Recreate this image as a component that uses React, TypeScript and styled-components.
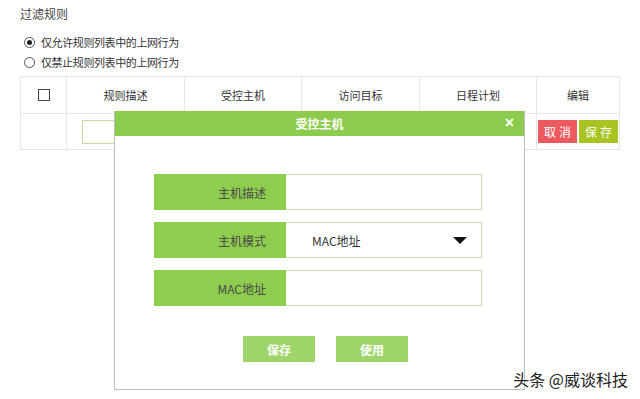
import React, { useState } from 'react';
import styled, { createGlobalStyle } from 'styled-components';

const GlobalStyle = createGlobalStyle`
  html, body {
    margin: 0;
    padding: 0;
    background: #ffffff;
  }
  body {
    font-family: "Microsoft YaHei", "Noto Sans CJK SC", "Liberation Sans", sans-serif;
    color: #333;
  }
`;

const Page = styled.div`
  position: relative;
  width: 640px;
  height: 399px;
  padding: 5px 20px 0;
  box-sizing: border-box;
  overflow: hidden;
`;

const Title = styled.div`
  font-size: 12px;
  line-height: 18px;
  color: #444;
  margin-bottom: 9px;
`;

const RadioRow = styled.label`
  display: flex;
  align-items: center;
  height: 20px;
  padding-left: 4px;
  font-size: 11px;
  letter-spacing: -0.4px;
  color: #333;
  gap: 6px;
`;

const RadioDot = styled.span<{ $checked?: boolean }>`
  width: 9px;
  height: 9px;
  border: 1px solid #555;
  border-radius: 50%;
  display: flex;
  align-items: center;
  justify-content: center;
  &::after {
    content: '';
    width: 5px;
    height: 5px;
    border-radius: 50%;
    background: ${p => (p.$checked ? '#222' : 'transparent')};
  }
`;

const Table = styled.div`
  margin-top: 4px;
  width: 600px;
  border: 1px solid #e6e6e6;
  box-sizing: border-box;
`;

const Row = styled.div<{ $height: number }>`
  display: grid;
  grid-template-columns: 45px 118px 117px 118px 117px 1fr;
  height: ${p => p.$height}px;
  & + & {
    border-top: 1px solid #e6e6e6;
  }
`;

const Cell = styled.div`
  display: flex;
  align-items: center;
  justify-content: center;
  font-size: 11px;
  color: #333;
  & + & {
    border-left: 1px solid #e6e6e6;
  }
`;

const Checkbox = styled.span`
  width: 10px;
  height: 10px;
  border: 1px solid #444;
`;

const InputCell = styled(Cell)`
  justify-content: flex-start;
`;

const CellInput = styled.div`
  width: 90px;
  height: 24px;
  border: 1px solid #c9d9a4;
  box-sizing: border-box;
  margin-left: 15px;
`;

const EditCell = styled(Cell)`
  gap: 2px;
`;

const SmallBtn = styled.button<{ $tone: 'red' | 'olive' }>`
  width: 39px;
  height: 23px;
  border: none;
  padding: 0;
  color: #fff;
  font-family: inherit;
  font-size: 12px;
  letter-spacing: 3px;
  text-indent: 3px;
  background: ${p => (p.$tone === 'red' ? '#ec5a5f' : '#a8c423')};
`;

const Modal = styled.div`
  position: absolute;
  left: 114px;
  top: 111px;
  width: 411px;
  height: 279px;
  background: #fff;
  border: 1px solid #bdbdbd;
  border-top: none;
  box-sizing: border-box;
  display: flex;
  flex-direction: column;
`;

const ModalHeader = styled.div`
  position: relative;
  height: 25px;
  background: #8dcb4d;
  color: #fff;
  font-size: 12px;
  font-weight: bold;
  display: flex;
  align-items: center;
  justify-content: center;
`;

const Close = styled.span`
  position: absolute;
  right: 10px;
  top: 3px;
  font-size: 16px;
  line-height: 18px;
  font-family: "Liberation Sans", sans-serif;
  font-weight: bold;
`;

const Form = styled.div`
  display: flex;
  flex-direction: column;
  gap: 12px;
  padding: 38px 0 0 39px;
`;

const Field = styled.div`
  display: flex;
  width: 328px;
  height: 36px;
`;

const FieldLabel = styled.div`
  width: 132px;
  background: #8fcd4f;
  display: flex;
  align-items: center;
  justify-content: flex-end;
  padding-right: 20px;
  box-sizing: border-box;
  font-size: 12px;
  color: #4a4a4a;
`;

const FieldBox = styled.div`
  flex: 1;
  border: 1px solid #cfd6b3;
  border-left: none;
  display: flex;
  align-items: center;
  justify-content: space-between;
  padding: 0 14px 0 26px;
  font-size: 12px;
  color: #333;
`;

const Caret = styled.span`
  width: 0;
  height: 0;
  border-left: 7px solid transparent;
  border-right: 7px solid transparent;
  border-top: 7px solid #111;
`;

const Actions = styled.div`
  display: flex;
  gap: 21px;
  padding: 30px 0 0 128px;
`;

const ActionBtn = styled.button`
  width: 72px;
  height: 26px;
  border: none;
  background: #a0d56c;
  color: #fff;
  font-family: inherit;
  font-size: 12px;
  font-weight: bold;
  padding: 0;
`;

const Watermark = styled.div`
  position: absolute;
  right: 12px;
  bottom: 8px;
  font-size: 16px;
  color: #222;
`;

const headers = ['规则描述', '受控主机', '访问目标', '日程计划', '编辑'];

export default function App() {
  const [allow] = useState(true);
  return (
    <Page>
      <GlobalStyle />
      <Title>过滤规则</Title>
      <RadioRow><RadioDot $checked={allow} />仅允许规则列表中的上网行为</RadioRow>
      <RadioRow><RadioDot $checked={!allow} />仅禁止规则列表中的上网行为</RadioRow>
      <Table>
        <Row $height={36}>
          <Cell><Checkbox /></Cell>
          {headers.map(h => <Cell key={h}>{h}</Cell>)}
        </Row>
        <Row $height={35}>
          <Cell />
          <InputCell><CellInput /></InputCell>
          <Cell />
          <Cell />
          <Cell />
          <EditCell>
            <SmallBtn $tone="red">取消</SmallBtn>
            <SmallBtn $tone="olive">保存</SmallBtn>
          </EditCell>
        </Row>
      </Table>

      <Modal>
        <ModalHeader>
          受控主机
          <Close>×</Close>
        </ModalHeader>
        <Form>
          <Field>
            <FieldLabel>主机描述</FieldLabel>
            <FieldBox />
          </Field>
          <Field>
            <FieldLabel>主机模式</FieldLabel>
            <FieldBox>MAC地址<Caret /></FieldBox>
          </Field>
          <Field>
            <FieldLabel>MAC地址</FieldLabel>
            <FieldBox />
          </Field>
        </Form>
        <Actions>
          <ActionBtn>保存</ActionBtn>
          <ActionBtn>使用</ActionBtn>
        </Actions>
      </Modal>

      <Watermark>头条 @威谈科技</Watermark>
    </Page>
  );
}
